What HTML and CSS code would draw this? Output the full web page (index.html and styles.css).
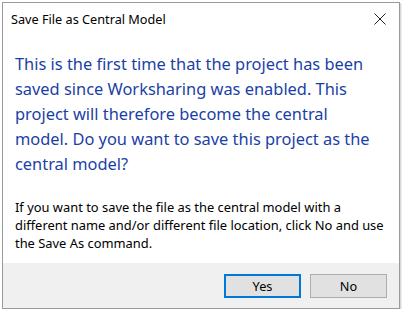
FILE: index.html
```html
<!DOCTYPE html>
<html>
<head>
<meta charset="utf-8">
<link rel="stylesheet" href="styles.css">
</head>
<body>
<div class="window">
  <div class="titlebar">
    <span class="title">Save File as Central Model</span>
    <svg class="close" width="12" height="12" viewBox="0 0 12 12"><path d="M0.5 0.5 L11.5 11.5 M11.5 0.5 L0.5 11.5" stroke="#222" stroke-width="1" fill="none"/></svg>
  </div>
  <div class="content">
    <p class="main">This is the first time that the project has been saved since Worksharing was enabled. This project will therefore become the central model. Do you want to save this project as the central model?</p>
    <p class="sub">If you want to save the file as the central model with a different name and/or different file location, click No and use the Save As command.</p>
  </div>
  <div class="footer">
    <button class="btn default">Yes</button>
    <button class="btn">No</button>
  </div>
</div>
</body>
</html>
```
FILE: styles.css
```css
html, body {
  margin: 0;
  padding: 0;
  background: #ffffff;
}
body {
  padding: 2px 0 0 2px;
  font-family: "Noto Sans", "Open Sans", sans-serif;
}
.window {
  width: 396px;
  height: 305px;
  border: 1px solid #9a9a9a;
  box-shadow: 1px 1px 0 #d8d8d8, 2px 2px 0 #ececec;
  background: #fff;
  display: flex;
  flex-direction: column;
}
.titlebar {
  height: 32px;
  display: flex;
  align-items: center;
  justify-content: space-between;
  padding: 0 13px 0 8px;
  flex: none;
}
.title {
  font-size: 12.7px;
  color: #000;
}
.close {
  display: block;
}
.content {
  flex: 1;
  padding: 16px 0 0 12px;
}
.main {
  margin: 0;
  max-width: 356px;
  font-size: 16.4px;
  line-height: 25px;
  color: #1b3fa6;
}
.sub {
  margin: 22px 0 0 0;
  max-width: 373px;
  font-size: 12.9px;
  line-height: 18px;
  color: #000;
}
.footer {
  height: 45px;
  flex: none;
  background: #f0f0f0;
  display: flex;
  justify-content: flex-end;
  align-items: center;
  gap: 9px;
  padding: 0 12px 0 0;
}
.btn {
  width: 77px;
  height: 24px;
  box-sizing: border-box;
  border: 1px solid #adadad;
  background: #e1e1e1;
  font-family: "Noto Sans", sans-serif;
  font-size: 12.7px;
  color: #000;
  padding: 0;
  margin: 0;
}
.btn.default {
  border: 2px solid #0078d7;
}
```
